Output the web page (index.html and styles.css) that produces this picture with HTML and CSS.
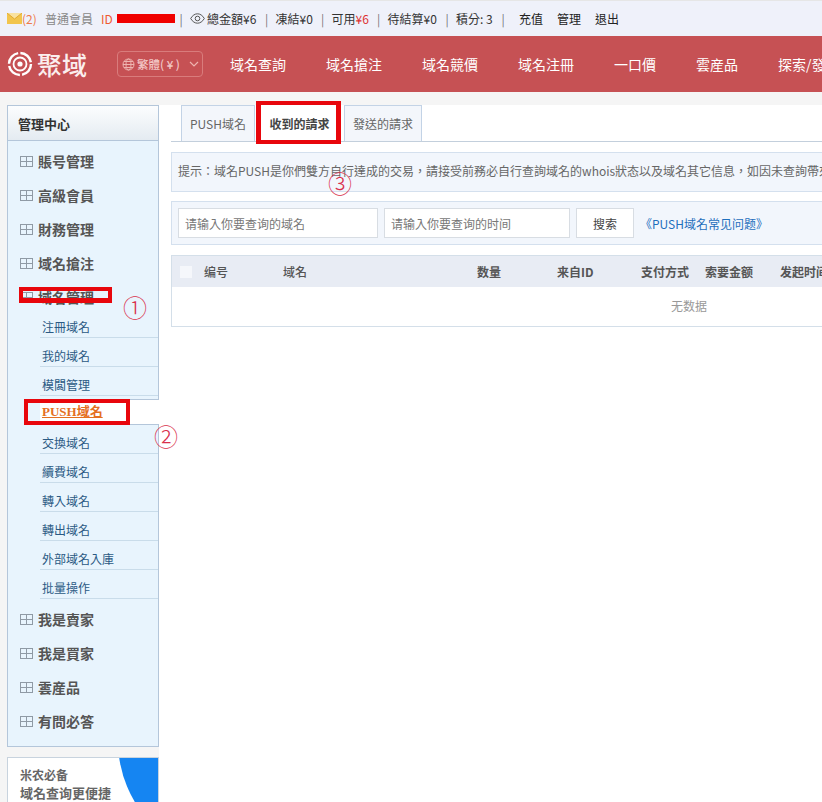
FILE: index.html
```html
<!DOCTYPE html>
<html lang="zh-Hant">
<head>
    <meta charset="UTF-8">
    <meta name="viewport" content="width=device-width, initial-scale=1.0">
    <title>PUSH域名</title>
    <link rel="stylesheet" href="styles.css">
</head>
<body>
    <div class="topbar">
        <svg class="mail" width="15" height="11" viewBox="0 0 15 11"><rect width="15" height="11" fill="#f2c54e"/><path d="M0 0l7.5 6L15 0" fill="#f9e2a0" stroke="#e0a92f" stroke-width="1"/></svg>
        <span class="msg-count">(2)</span>
        <span class="level">普通會員</span>
        <span class="user-id">ID<span class="redact"></span></span>
        <span class="sep">|</span>
        <svg class="eye" width="15" height="11" viewBox="0 0 15 11" fill="none" stroke="#555"><path d="M.7 5.5C2.5 2.3 5 .8 7.5.8s5 1.5 6.8 4.7C12.5 8.7 10 10.2 7.5 10.2S2.5 8.7.7 5.5z"/><circle cx="7.5" cy="5.5" r="2.3"/></svg>
        <span class="stat wide">總金額¥6</span>
        <span class="sep">|</span>
        <span class="stat">凍結¥0</span>
        <span class="sep">|</span>
        <span class="stat">可用<em>¥6</em></span>
        <span class="sep">|</span>
        <span class="stat wide">待結算¥0</span>
        <span class="sep">|</span>
        <span class="stat">積分: 3</span>
        <span class="sep">|</span>
        <a class="top-link first">充值</a>
        <a class="top-link">管理</a>
        <a class="top-link">退出</a>
    </div>

    <div class="header">
        <div class="logo">
            <svg width="26" height="26" viewBox="0 0 26 26" fill="none" stroke="#fff"><circle cx="13" cy="13" r="11" stroke-width="2.4" stroke-dasharray="15 2.3"/><circle cx="13" cy="13" r="6.5" stroke-width="1.8"/><circle cx="13" cy="13" r="2.6" fill="#fff" stroke="none"/></svg>
            <span class="logo-text">聚域</span>
        </div>
        <div class="lang">
            <svg width="13" height="13" viewBox="0 0 13 13" fill="none" stroke="#eeb4b0"><circle cx="6.5" cy="6.5" r="5.5"/><ellipse cx="6.5" cy="6.5" rx="2.5" ry="5.5"/><path d="M1 6.5h11M2 3.5h9M2 9.5h9"/></svg>
            <span>繁體( ¥ )</span>
            <svg class="chevron" width="10" height="6" viewBox="0 0 10 6" fill="none" stroke="#eeb4b0" stroke-width="1.2"><path d="M1 1l4 4 4-4"/></svg>
        </div>
        <div class="nav">
            <a>域名查詢</a>
            <a>域名搶注</a>
            <a>域名競價</a>
            <a>域名注冊</a>
            <a>一口價</a>
            <a>雲産品</a>
            <a>探索/發現</a>
        </div>
    </div>

    <div class="main">
        <div class="side">
            <div class="side-box">
                <div class="side-title">管理中心</div>
                <div class="group"><i class="plus"></i>賬号管理</div>
                <div class="group"><i class="plus"></i>高級會員</div>
                <div class="group"><i class="plus"></i>財務管理</div>
                <div class="group"><i class="plus"></i>域名搶注</div>
                <div class="group"><i class="plus"></i>域名管理</div>
                <ul class="sub">
                    <li>注冊域名</li>
                    <li>我的域名</li>
                    <li>模闆管理</li>
                    <li class="active"><span>PUSH域名</span></li>
                    <li>交換域名</li>
                    <li>續費域名</li>
                    <li>轉入域名</li>
                    <li>轉出域名</li>
                    <li>外部域名入庫</li>
                    <li>批量操作</li>
                </ul>
                <div class="group"><i class="plus"></i>我是賣家</div>
                <div class="group"><i class="plus"></i>我是買家</div>
                <div class="group"><i class="plus"></i>雲産品</div>
                <div class="group"><i class="plus"></i>有問必答</div>
            </div>
            <div class="promo">
                <div class="promo-blob"></div>
                <p>米农必备</p>
                <p>域名查询更便捷</p>
            </div>
        </div>

        <div class="content">
            <div class="tabs">
                <a class="tab">PUSH域名</a>
                <a class="tab selected">收到的請求</a>
                <a class="tab">發送的請求</a>
            </div>
            <div class="tip">提示：域名PUSH是你們雙方自行達成的交易，請接受前務必自行查詢域名的whois狀态以及域名其它信息，如因未查詢帶來的損失</div>
            <div class="search">
                <input class="search-input first" placeholder="请输入你要查询的域名">
                <input class="search-input second" placeholder="请输入你要查询的时间">
                <button class="search-btn">搜索</button>
                <a class="faq">《PUSH域名常见问题》</a>
            </div>
            <div class="list">
                <div class="list-head">
                    <span><i class="check"></i></span>
                    <span class="light">编号</span>
                    <span class="light">域名</span>
                    <span>数量</span>
                    <span>来自ID</span>
                    <span>支付方式</span>
                    <span>索要金额</span>
                    <span>发起时间</span>
                </div>
                <div class="empty">无数据</div>
            </div>
        </div>
    </div>

    <!-- red marks drawn on top of the screenshot -->
    <div class="mark mark-one"></div>
    <div class="mark mark-two"></div>
    <div class="mark mark-three"></div>
    <span class="num num-one">①</span>
    <span class="num num-two">②</span>
    <span class="num num-three">③</span>
</body>
</html>
```

FILE: styles.css
```css
* {
    box-sizing: border-box;
}

html, body {
    height: 802px;
    overflow: hidden;
}

body {
    margin: 0;
    background-color: #f5f5f5;
    color: #444;
    font-family: "Noto Sans CJK TC", "Noto Sans CJK SC", "Open Sans", sans-serif;
    font-size: 12px;
    position: relative;
}

.topbar {
    height: 36px;
    background-color: #eff1fa;
    border-top: 1px solid #e6e6e6;
    display: flex;
    align-items: center;
    padding-left: 7px;
    color: #333;
    white-space: nowrap;
}

.topbar > * {
    flex: none;
}

.msg-count {
    color: #ee7b4a;
    width: 23px;
}

.level {
    color: #888;
    width: 56px;
}

.user-id {
    color: #ef5a32;
    display: flex;
    align-items: center;
    width: 71px;
}

.redact {
    flex: none;
    width: 58px;
    height: 9px;
    background-color: #f00000;
    margin-left: 4px;
}

.sep {
    color: #777;
    width: 18px;
    text-align: center;
}

.eye {
    margin-right: 2px;
}

.stat {
    width: 38px;
}

.stat.wide {
    width: 50.5px;
}

.stat em {
    color: #d33;
    font-style: normal;
}

.top-link {
    margin-left: 14px;
    color: #222;
}

.top-link.first {
    margin-left: 7px;
}

.header {
    height: 56px;
    background-color: #c65154;
    display: flex;
    align-items: center;
    padding-left: 7px;
    color: #fff;
    white-space: nowrap;
    overflow: hidden;
}

.header > * {
    flex: none;
}

.logo {
    display: flex;
    align-items: center;
    width: 110px;
}

.logo-text {
    font-size: 25px;
    line-height: 28px;
    margin-left: 4px;
    font-weight: 500;
    color: #fbeeee;
}

.lang {
    width: 86px;
    height: 26px;
    border: 1px solid #d97c7c;
    border-radius: 4px;
    display: flex;
    align-items: center;
    gap: 2px;
    padding: 0 3px 0 4px;
    font-size: 11.5px;
    font-weight: 500;
    color: #f2c6c4;
}

.chevron {
    margin-left: auto;
}

.nav {
    display: flex;
    gap: 40px;
    margin-left: 27px;
    font-size: 14px;
}

.main {
    display: flex;
    padding: 13px 0 0 7px;
}

.side {
    width: 152px;
    flex: none;
}

.side-box {
    border: 1px solid #b4c6da;
    background-color: #e8f4fd;
    height: 642px;
}

.side-title {
    height: 35px;
    line-height: 35px;
    padding-left: 10px;
    font-size: 13px;
    font-weight: 700;
    color: #333;
    background: linear-gradient(#fcfdfe, #e4ebf1);
    border-bottom: 1px solid #b4c6da;
    margin-bottom: 3px;
}

.group {
    height: 34px;
    display: flex;
    align-items: center;
    padding-left: 12px;
    font-size: 14px;
    font-weight: 700;
    color: #555;
}

.plus {
    width: 13px;
    height: 11px;
    margin-right: 5px;
    border: 1px solid #8f9aa5;
    background:
        linear-gradient(#8f9aa5, #8f9aa5) center / 1px 100% no-repeat,
        linear-gradient(#8f9aa5, #8f9aa5) center / 100% 1px no-repeat;
}

.sub {
    list-style: none;
    margin: -5px 0 3px;
    padding: 0 0 0 32px;
    color: #2b5a84;
}

.sub li {
    height: 29px;
    line-height: 20px;
    padding: 8px 0 0 2px;
    border-bottom: 1px solid #c9dcea;
}

.sub li.active {
    height: 26px;
    line-height: 24px;
    padding-top: 0;
    margin: 3px -1px 0 0;
    background-color: #fff;
    border-top: 1px solid #b4c6da;
    border-bottom: 1px solid #b4c6da;
    color: #e4701f;
    font-size: 13px;
    font-weight: 700;
    font-family: "Liberation Serif", "Noto Sans CJK TC", serif;
}

.sub li.active span {
    text-decoration: underline;
}

.promo {
    margin-top: 10px;
    height: 60px;
    background-color: #fff;
    border: 1px solid #c8d3de;
    border-bottom: none;
    position: relative;
    overflow: hidden;
    padding: 8px 0 0 12px;
    color: #666;
    font-weight: 700;
}

.promo p {
    margin: 0;
    line-height: 18px;
}

.promo p + p {
    font-size: 13px;
}

.promo-blob {
    position: absolute;
    left: 110px;
    top: -136px;
    width: 238px;
    height: 238px;
    border-radius: 50%;
    background-color: #1585f2;
}

.content {
    flex: 1;
    min-width: 0;
    background-color: #fff;
    padding-left: 12px;
    height: 697px;
    overflow: hidden;
}

.tabs {
    display: flex;
    height: 37px;
    padding-left: 10px;
    border-bottom: 1px solid #c3cfdc;
}

.tab {
    height: 36px;
    padding: 0 8px;
    line-height: 36px;
    background-color: #f3f6fb;
    border: 1px solid #c3d3e6;
    border-bottom: none;
    color: #666;
    margin-right: 3px;
}

.tab.selected {
    width: 83px;
    background-color: #fff;
    border-color: #fff;
    color: #444;
    font-weight: 700;
    padding: 0;
    text-align: center;
}

.tip {
    margin-top: 10px;
    height: 40px;
    line-height: 36px;
    padding-left: 6px;
    width: 1036px;
    background-color: #f2f6fc;
    border: 1px solid #d4e0ee;
    color: #666;
    font-family: "Noto Sans CJK SC", sans-serif;
    white-space: nowrap;
    overflow: hidden;
}

.search {
    margin-top: 9px;
    height: 44px;
    width: 1036px;
    background-color: #f2f6fc;
    border: 1px solid #d4e0ee;
    display: flex;
    align-items: center;
    padding-left: 6px;
}

.search-input {
    height: 30px;
    border: 1px solid #d8dde3;
    background-color: #fff;
    padding: 0 6px;
    font: inherit;
    margin-right: 6px;
}

.search-input::placeholder {
    color: #777;
}

.search-input.first {
    width: 200px;
}

.search-input.second {
    width: 186px;
}

.search-btn {
    width: 58px;
    height: 30px;
    border: 1px solid #d8dde3;
    background-color: #fff;
    color: #444;
    font: inherit;
    padding: 0;
}

.faq {
    margin-left: 6px;
    color: #1f6fbd;
}

.list {
    margin-top: 10px;
    width: 1036px;
    border: 1px solid #d4dfe9;
}

.list-head {
    height: 31px;
    background-color: #e8ecf4;
    display: grid;
    grid-template-columns: 24px 79px 194px 80px 84px 64px 75px 100px;
    align-items: center;
    padding-left: 8px;
    font-weight: 700;
    color: #555;
}

.list-head span {
    font-family: "Noto Sans CJK SC", sans-serif;
    line-height: 1;
}

.list-head .light {
    font-weight: 500;
}

.check {
    display: block;
    width: 12px;
    height: 12px;
    background-color: #f5f7fb;
}

.empty {
    height: 39px;
    line-height: 38px;
    text-align: center;
    color: #999;
    font-family: "Noto Sans CJK SC", sans-serif;
}

.mark {
    position: absolute;
    border-style: solid;
    border-color: #e8060c;
}

.mark-one {
    left: 19px;
    top: 287px;
    width: 93px;
    height: 16px;
    border-width: 4px 4px 5px;
}

.mark-two {
    left: 24px;
    top: 399px;
    width: 106px;
    height: 26px;
    border-width: 4px;
}

.mark-three {
    left: 256px;
    top: 101px;
    width: 85px;
    height: 43px;
    border-width: 4px 5px;
}

.num {
    position: absolute;
    color: #d9304c;
    font-size: 24px;
    line-height: 24px;
    font-family: "Noto Sans CJK SC", sans-serif;
    font-weight: 300;
}

.num-one {
    left: 123px;
    top: 295px;
}

.num-two {
    left: 154px;
    top: 424px;
}

.num-three {
    left: 328px;
    top: 171px;
}
```
